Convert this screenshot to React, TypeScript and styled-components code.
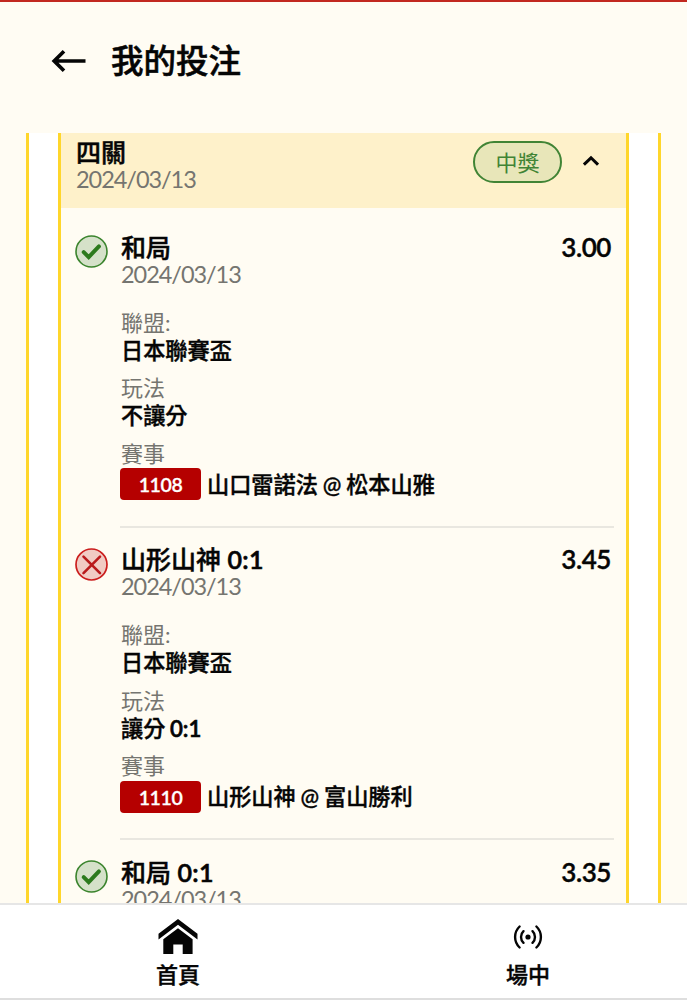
import React from 'react';
import styled, { createGlobalStyle } from 'styled-components';

const GlobalStyle = createGlobalStyle`
  * { box-sizing: border-box; }
  body {
    margin: 0;
    background: #fffcf3;
    color: #050505;
    font-family: Lato, "Noto Sans CJK TC", sans-serif;
    overflow: hidden;
  }
`;

const Page = styled.div`
  height: 1000px;
  display: flex;
  flex-direction: column;
  border-top: 2px solid #c2281f;
`;

const TopBar = styled.header`
  flex: none;
  height: 131px;
  padding: 38px 0 0 51px;
  display: flex;
  align-items: flex-start;
  gap: 25px;
  svg { margin-top: 9px; }
`;

const PageTitle = styled.h1`
  margin: 0;
  font-size: 32.5px;
  line-height: 42px;
  font-weight: 500;
  -webkit-text-stroke: 0.55px currentColor;
`;

const Scroller = styled.main`
  flex: 1;
  min-height: 0;
  overflow: hidden;
  padding: 0 26px;
  display: flex;
`;

const OuterCard = styled.div`
  flex: 1;
  background: #fff;
  border: solid #ffd62b;
  border-width: 0 3px;
  padding: 0 29px;
  height: 960px;
`;

const TicketCard = styled.section`
  height: 100%;
  background: #fffcf3;
  border: solid #ffd62b;
  border-width: 0 3px;
`;

const TicketHeader = styled.div`
  height: 75px;
  background: #fef1ca;
  padding: 5px 27px 0 15px;
  display: flex;
  align-items: flex-start;
`;

const Grow = styled.div`
  flex: 1;
`;

const Heading = styled.div`
  font-size: 25px;
  line-height: 29px;
  height: 29px;
  font-weight: 500;
  white-space: nowrap;
  -webkit-text-stroke: 0.45px currentColor;
`;

const Latin = styled.span`
  font-weight: 600;
  letter-spacing: 0.3px;
  -webkit-text-stroke: 0.6px currentColor;
`;

const DateText = styled.div`
  font-size: 23.5px;
  line-height: 25px;
  height: 25px;
  color: #757570;
  letter-spacing: -1.05px;
`;

const StatusPill = styled.span`
  width: 89px;
  height: 42px;
  margin: 3px 20px 0 0;
  border: 2px solid #418435;
  border-radius: 21px;
  background: #e8e6b9;
  color: #418435;
  font-size: 22px;
  line-height: 39px;
  text-align: center;
`;

const Bets = styled.div`
  padding: 7px 12px 0 14px;
`;

const Bet = styled.article`
  display: flex;
  gap: 12px;
  height: 312.5px;
  padding-top: 17.5px;
  & > svg { flex: none; margin-top: 2.5px; }
`;

const BetBody = styled.div`
  flex: 1;
  height: 295px;
  border-bottom: 2px solid #e9e7e0;
`;

const BetTop = styled.div`
  display: flex;
  justify-content: space-between;
  padding: 0 3px 0 1px;
  margin-bottom: 22px;
`;

const Odds = styled.div`
  font-size: 26px;
  line-height: 29px;
  font-weight: 600;
  letter-spacing: -0.4px;
  -webkit-text-stroke: 0.4px currentColor;
`;

const Field = styled.div`
  height: 65.5px;
  padding-left: 1px;
`;

const Label = styled.div<{ $inset?: boolean }>`
  font-size: 22px;
  line-height: 28px;
  height: 28px;
  padding-left: ${(p) => (p.$inset ? 1 : 0)}px;
  color: #757570;
`;

const Value = styled.div`
  font-size: 22.2px;
  line-height: 27px;
  height: 27px;
  font-weight: 500;
  -webkit-text-stroke: 0.4px currentColor;
  ${Latin} { letter-spacing: 0; margin-left: -1px; }
`;

const MatchRow = styled.div`
  display: flex;
  align-items: center;
  gap: 6px;
  font-size: 22.2px;
  line-height: 33px;
  font-weight: 500;
  white-space: nowrap;
  word-spacing: -0.8px;
  -webkit-text-stroke: 0.4px currentColor;
`;

const MatchCode = styled.span`
  width: 81px;
  height: 32px;
  border-radius: 4px;
  background: #b50000;
  color: #fff;
  font-size: 19.5px;
  line-height: 33px;
  font-weight: 600;
  letter-spacing: -0.4px;
  text-align: center;
  -webkit-text-stroke: 0.3px currentColor;
`;

const TabBar = styled.nav`
  flex: none;
  height: 97px;
  background: #fff;
  border-top: 2px solid #e6e6e6;
  border-bottom: 2px solid #dedede;
  display: grid;
  grid-template-columns: 356px 1fr;
`;

const Tab = styled.a<{ $shift?: number }>`
  display: flex;
  flex-direction: column;
  align-items: center;
  padding-top: 13px;
  padding-left: ${(p) => p.$shift ?? 0}px;
  font-size: 22px;
  font-weight: 500;
  line-height: 28px;
  -webkit-text-stroke: 0.4px currentColor;
  svg { margin-bottom: 6px; }
`;

const Chevron = styled.svg`
  margin-top: 17px;
`;

function WonIcon() {
  return (
    <svg width="33" height="33" viewBox="0 0 33 33" fill="none">
      <circle cx="16.5" cy="16.5" r="15.5" fill="#d5e1c9" stroke="#3b842d" strokeWidth="1.6" />
      <path d="M8.7 17.1l5 5 10.2-10.7" stroke="#2c7a1d" strokeWidth="4" strokeLinecap="round" />
    </svg>
  );
}

function LostIcon() {
  return (
    <svg width="33" height="33" viewBox="0 0 33 33" fill="none">
      <circle cx="16.5" cy="16.5" r="15.5" fill="#f1cbc4" stroke="#cb1d1d" strokeWidth="1.7" />
      <path d="M8.5 8.7l16.5 16.5M25 8.700L8.500 25.200" stroke="#b9191b" strokeWidth="2.6" strokeLinecap="round" />
    </svg>
  );
}

interface BetData {
  won: boolean;
  pick: string;
  score?: string;
  odds: string;
  play: string;
  code: string;
  match: string;
}

const bets: BetData[] = [
  { won: true, pick: '和局', odds: '3.00', play: '不讓分', code: '1108', match: '山口雷諾法 @ 松本山雅' },
  { won: false, pick: '山形山神', score: '0:1', odds: '3.45', play: '讓分', code: '1110', match: '山形山神 @ 富山勝利' },
];

function WithScore({ text, score }: { text: string; score?: string }) {
  return (
    <>
      {text}
      {score && <Latin> {score}</Latin>}
    </>
  );
}

function BetSummary({ pick, score, odds }: { pick: string; score?: string; odds: string }) {
  return (
    <BetTop>
      <div>
        <Heading>
          <WithScore text={pick} score={score} />
        </Heading>
        <DateText>2024/03/13</DateText>
      </div>
      <Odds>{odds}</Odds>
    </BetTop>
  );
}

export default function App() {
  return (
    <>
      <GlobalStyle />
      <Page>
        <TopBar>
          <svg width="35" height="24" viewBox="0 0 35 24" fill="none" stroke="#050505" strokeWidth="3.7">
            <path d="M34.500 12H3.500M13 2.200L3.200 12l9.800 9.800" />
          </svg>
          <PageTitle>我的投注</PageTitle>
        </TopBar>
        <Scroller>
          <OuterCard>
            <TicketCard>
              <TicketHeader>
                <Grow>
                  <Heading>四關</Heading>
                  <DateText>2024/03/13</DateText>
                </Grow>
                <StatusPill>中獎</StatusPill>
                <Chevron width="17" height="12" viewBox="0 0 17 12" fill="none" stroke="#050505" strokeWidth="3">
                  <path d="M1.900 9.700L9 2.800l7 6.900" />
                </Chevron>
              </TicketHeader>
              <Bets>
                {bets.map((bet) => (
                  <Bet key={bet.code}>
                    {bet.won ? <WonIcon /> : <LostIcon />}
                    <BetBody>
                      <BetSummary pick={bet.pick} score={bet.score} odds={bet.odds} />
                      <Field>
                        <Label>聯盟:</Label>
                        <Value>日本聯賽盃</Value>
                      </Field>
                      <Field>
                        <Label>玩法</Label>
                        <Value>
                          <WithScore text={bet.play} score={bet.score} />
                        </Value>
                      </Field>
                      <Label $inset>賽事</Label>
                      <MatchRow>
                        <MatchCode>{bet.code}</MatchCode>
                        {bet.match}
                      </MatchRow>
                    </BetBody>
                  </Bet>
                ))}
                <Bet>
                  <WonIcon />
                  <BetBody>
                    <BetSummary pick="和局" score="0:1" odds="3.35" />
                  </BetBody>
                </Bet>
              </Bets>
            </TicketCard>
          </OuterCard>
        </Scroller>
        <TabBar>
          <Tab>
            <svg width="40" height="37" viewBox="0 0 40 37" fill="#050505">
              <path d="M20 1l19.500 14.800v5.600L20 6.700.5 21.400v-5.600z" />
              <path d="M20 10.300l14.600 11V36H24.700V26.500h-9.400V36H5.300V21.300z" />
            </svg>
            首頁
          </Tab>
          <Tab $shift={13}>
            <svg width="32" height="37" viewBox="0 0 32 37" fill="none" stroke="#050505" strokeWidth="2.4" strokeLinecap="round">
              <circle cx="16" cy="19" r="2.600" fill="#050505" stroke="none" />
              <path d="M7.600 8.500a14.500 14.500 0 0 0 0 21M24.400 8.500a14.500 14.500 0 0 1 0 21M11.500 13.200a8 8 0 0 0 0 11.600M20.500 13.200a8 8 0 0 1 0 11.600" />
            </svg>
            場中
          </Tab>
        </TabBar>
      </Page>
    </>
  );
}
